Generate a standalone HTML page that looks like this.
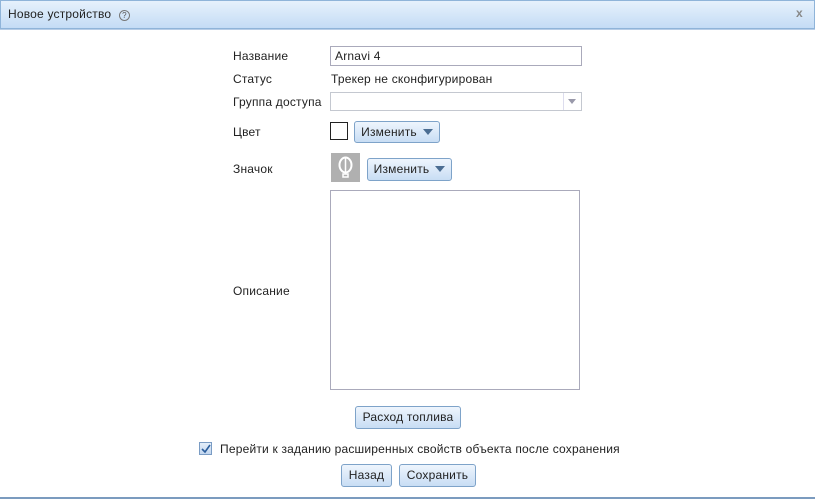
<!DOCTYPE html><html><head><meta charset="utf-8"><style>
body{margin:0;width:815px;height:500px;background:#fff;font-family:"Liberation Sans",sans-serif;font-size:12px;color:#222;position:relative;overflow:hidden;letter-spacing:0.2px}
.a{position:absolute}
.hdr{left:0;top:0;width:813px;height:27px;border:1px solid #8fb4d9;background:linear-gradient(#e6f1fc,#c4dcf5);}
.lbl{left:233px}
.btn{position:absolute;border:1px solid #7ea3c9;border-radius:3px;background:linear-gradient(#eef5fd,#c8ddf4);font-size:12px;line-height:20px;text-align:center;color:#222;box-sizing:border-box}
.tri{display:inline-block;width:0;height:0;border-left:5px solid transparent;border-right:5px solid transparent;border-top:6px solid #4b6d92;margin-left:6px;vertical-align:1px}
</style></head><body>
<div class="a hdr"></div>
<div class="a" style="left:8px;top:7px;font-size:12px">Новое устройство <span style="color:#555;border:1px solid #777;border-radius:50%;display:inline-block;width:9px;height:9px;line-height:9px;text-align:center;font-size:8px;margin-left:4px;letter-spacing:0">?</span></div>
<div class="a" style="left:796px;top:6px;color:#888;font-size:12px;font-weight:bold">x</div>
<div class="a" style="left:0;top:29px;width:815px;height:1px;background:#b7cde6"></div>
<div class="a lbl" style="top:49px">Название</div>
<div class="a" style="left:330px;top:46px;box-sizing:border-box;width:252px;height:20px;border:1px solid #aab;padding:2px 4px">Arnavi 4</div>
<div class="a lbl" style="top:72px">Статус</div>
<div class="a" style="left:331px;top:72px">Трекер не сконфигурирован</div>
<div class="a lbl" style="top:95px">Группа доступа</div>
<div class="a" style="left:330px;top:92px;width:252px;height:19px;border:1px solid #c4c8d0;box-sizing:border-box"><div class="a" style="right:0;top:0;width:17px;height:17px;border-left:1px solid #dde"><span class="a" style="left:4px;top:6px;border-left:4px solid transparent;border-right:4px solid transparent;border-top:5px solid #99a"></span></div></div>
<div class="a lbl" style="top:125px">Цвет</div>
<div class="a" style="left:330px;top:122px;width:18px;height:18px;border:1px solid #222;box-sizing:border-box"></div>
<div class="btn" style="left:354px;top:121px;width:86px;height:22px">Изменить<span class="tri"></span></div>
<div class="a lbl" style="top:162px">Значок</div>
<div class="a" style="left:331px;top:153px;width:29px;height:29px;background:#b0b0b0">
<svg width="29" height="29"><ellipse cx="14.5" cy="12" rx="6" ry="7.5" fill="none" stroke="#fff" stroke-width="2"/><path d="M14.5 5v15M12 21h5v3h-5z" stroke="#fff" stroke-width="1.5" fill="none"/></svg></div>
<div class="btn" style="left:367px;top:158px;width:85px;height:23px;line-height:21px">Изменить<span class="tri"></span></div>
<div class="a" style="left:330px;top:190px;width:250px;height:200px;border:1px solid #aab;box-sizing:border-box"></div>
<div class="a lbl" style="top:284px">Описание</div>
<div class="btn" style="left:355px;top:406px;width:106px;height:23px;line-height:21px">Расход топлива</div>
<div class="a" style="left:199px;top:442px;width:13px;height:13px;border:1px solid #7a9cc4;box-sizing:border-box;background:linear-gradient(#e3eefa,#c2d6ef)"><svg width="11" height="11" style="position:absolute;left:0;top:0"><path d="M2 6l3 3 5-7" stroke="#2a5d9c" stroke-width="1.6" fill="none"/></svg></div>
<div class="a" style="left:220px;top:442px">Перейти к заданию расширенных свойств объекта после сохранения</div>
<div class="btn" style="left:341px;top:464px;width:51px;height:23px;line-height:21px">Назад</div>
<div class="btn" style="left:399px;top:464px;width:77px;height:23px;line-height:21px">Сохранить</div>
<div class="a" style="left:0;top:497px;width:815px;height:2px;background:#7b9bbf"></div>
</body></html>
